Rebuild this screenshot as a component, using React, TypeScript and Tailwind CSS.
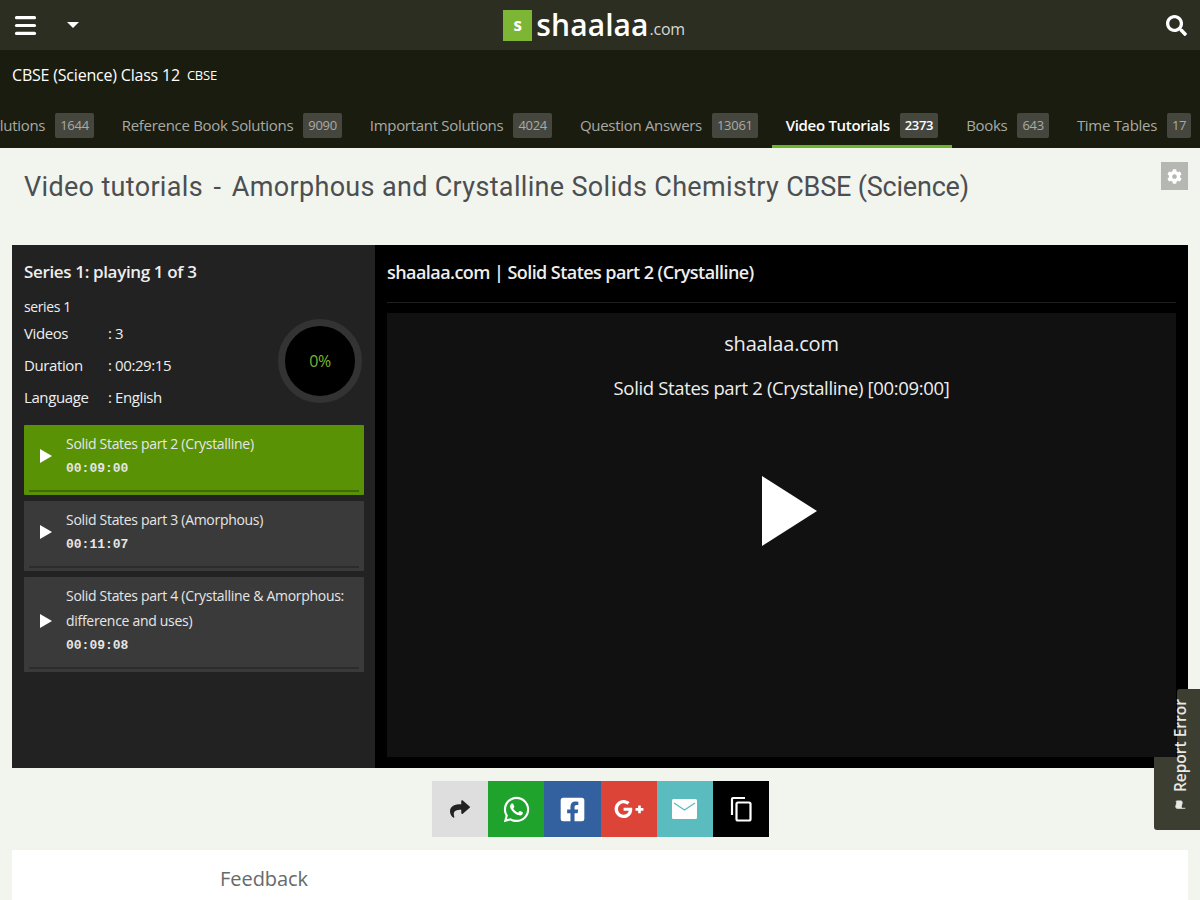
import { Menu, Flag } from "lucide-react";
import { FaWhatsapp, FaFacebookSquare, FaGooglePlusG, FaShare, FaSearch, FaCog } from "react-icons/fa";

const tabs = [
  { label: "Textbook Solutions", count: "1644" },
  { label: "Reference Book Solutions", count: "9090" },
  { label: "Important Solutions", count: "4024" },
  { label: "Question Answers", count: "13061" },
  { label: "Video Tutorials", count: "2373", active: true },
  { label: "Books", count: "643" },
  { label: "Time Tables", count: "17" },
];

const videos = [
  { title: "Solid States part 2 (Crystalline)", time: "00:09:00", active: true },
  { title: "Solid States part 3 (Amorphous)", time: "00:11:07" },
  { title: "Solid States part 4 (Crystalline & Amorphous: difference and uses)", time: "00:09:08" },
];

export default function App() {
  return (
    <div className="relative h-[900px] w-[1200px] overflow-hidden bg-[#f2f5ee] font-['Open_Sans',sans-serif]">
      <header className="flex h-[50px] items-center justify-between bg-[#2c2e22] pl-[12px] pr-[13px] text-white">
        <div className="flex w-[200px] items-center gap-[28px]">
          <Menu size={27} strokeWidth={2.8} />
          <div className="h-0 w-0 border-x-[6px] border-t-[6px] border-x-transparent border-t-white" />
        </div>
        <div className="mr-[11px] flex items-center gap-[4px]">
          <div className="flex h-[31px] w-[29px] items-center justify-center bg-[#7db635] text-[17px] font-bold text-white">
            s
          </div>
          <span className="text-[30px] leading-none font-semibold tracking-[0.1px]">shaalaa</span>
          <span className="mt-[7px] -ml-[3px] text-[16px] leading-none tracking-[-0.3px] text-[#d8d8d2]">.com</span>
        </div>
        <div className="flex w-[200px] justify-end">
          <FaSearch size={21} />
        </div>
      </header>

      <div className="bg-[#1a1c10]">
        <div className="flex h-[50px] items-center gap-[7px] pl-[12px] text-white">
          <span className="text-[16px] tracking-[-0.2px]">CBSE (Science) Class 12</span>
          <span className="mt-[1px] text-[13px] tracking-[-0.2px]">CBSE</span>
        </div>
        <div className="-ml-[97px] flex h-[48px] whitespace-nowrap">
          {tabs.map((t) => (
            <div
              key={t.label}
              className={`flex items-center gap-[10px] border-b-[3px] px-[14px] pt-[6px] text-[15px] tracking-[-0.3px] ${
                t.active ? "border-[#6fb52c] font-semibold text-white" : "border-transparent text-[#a9aaa4]"
              }`}
            >
              <span>{t.label}</span>
              <span
                className={`flex h-[25px] items-center rounded-[2px] bg-[#45473f] px-[5px] text-[13px] ${
                  t.active ? "text-white" : "text-[#a9aaa4]"
                }`}
              >
                {t.count}
              </span>
            </div>
          ))}
        </div>
      </div>

      <div className="flex h-[97px] items-start justify-between pl-[24px] pr-[12px] pt-[20px]">
        <h1 className="font-['Roboto',sans-serif] text-[27px] leading-[38px] tracking-[0.33px] text-[#4c4f52]">
          Video tutorials <span className="mx-[3.5px]">-</span> Amorphous and Crystalline Solids Chemistry{" "}
          <span className="tracking-[-0.2px]">CBSE (Science)</span>
        </h1>
        <div className="mt-[-6px] flex h-[28px] w-[27px] items-center justify-center bg-[#b5b7b3] text-white">
          <FaCog size={15} />
        </div>
      </div>

      <main className="mx-[12px] flex h-[523px] bg-black">
        <aside className="flex w-[363px] shrink-0 flex-col bg-[#222222] pl-[12px] pr-[11px] pt-[14px] text-[#eeeeee]">
          <h2 className="text-[17px] leading-[26px] font-semibold tracking-[-0.35px]">Series 1: playing 1 of 3</h2>
          <div className="flex items-start justify-between">
            <div className="pt-[12px] text-[15px] tracking-[-0.4px]">
              <div className="text-[14px] leading-[20px]">series 1</div>
              <InfoRow label="Videos" value=": 3" />
              <InfoRow label="Duration" value=": 00:29:15" />
              <InfoRow label="Language" value=": English" />
            </div>
            <div className="mt-[34px] mr-[2px] flex h-[84px] w-[84px] items-center justify-center rounded-full border-[7px] border-[#333333] bg-black text-[16px] tracking-[-0.5px] text-[#79b52d]">
              0%
            </div>
          </div>
          <div className="mt-[12px] flex flex-col gap-[6px]">
            {videos.map((v) => (
              <VideoRow key={v.title} {...v} />
            ))}
          </div>
        </aside>

        <section className="flex min-w-0 flex-1 flex-col px-[12px] pb-[11px]">
          <div className="flex h-[58px] shrink-0 items-center border-b border-[#1f1f1f] pb-[2px] text-[18px] font-semibold tracking-[-0.56px] text-[#eeeeee]">
            shaalaa.com | Solid States part 2 (Crystalline)
          </div>
          <div className="mt-[10px] flex flex-1 flex-col items-center bg-[#111111] pt-[16px] text-[#eeeeee]">
            <div className="text-[20px] leading-[30px] tracking-[-0.2px]">shaalaa.com</div>
            <div className="mt-[14px] text-[18.5px] leading-[30px] tracking-[-0.35px]">
              Solid States part 2 (Crystalline) [00:09:00]
            </div>
            <svg width="55" height="70" viewBox="0 0 55 70" className="mt-[73px] ml-[16px]">
              <polygon points="0,0 55,35 0,70" fill="white" />
            </svg>
          </div>
        </section>
      </main>

      <div className="mt-[13px] flex justify-center pl-[1px]">
        <ShareButton className="bg-[#dedede] text-[#222222]">
          <FaShare size={20} />
        </ShareButton>
        <ShareButton className="bg-[#1fa32c] text-white">
          <FaWhatsapp size={29} />
        </ShareButton>
        <ShareButton className="bg-[#33619f] text-white">
          <FaFacebookSquare size={27} />
        </ShareButton>
        <ShareButton className="bg-[#dc4437] text-white">
          <FaGooglePlusG size={30} />
        </ShareButton>
        <ShareButton className="bg-[#5abcbf] text-white">
          <svg width="25" height="20" viewBox="0 0 25 20">
            <rect width="25" height="20" rx="1.5" fill="white" />
            <polyline points="2,4 12.5,11 23,4" fill="none" stroke="#5abcbf" strokeWidth="1.3" />
          </svg>
        </ShareButton>
        <ShareButton className="bg-black text-white">
          <svg width="22" height="26" viewBox="0 0 22 26" fill="none" stroke="white" strokeWidth="2.2">
            <path d="M2 19V3a1 1 0 0 1 1-1h12" />
            <rect x="6.5" y="6.5" width="14" height="18" rx="1.5" />
          </svg>
        </ShareButton>
      </div>

      <div className="mx-[12px] mt-[13px] h-[60px] bg-white pl-[208px] pt-[14px] text-[20px] leading-[30px] tracking-[-0.05px] text-[#666a6c]">
        Feedback
      </div>

      {/* report error tab sits over the player */}
      <div className="absolute right-0 top-[689px] h-[68px] w-[23px] rounded-tl-[3px] bg-[#3c3e32]" />
      <div className="absolute right-0 top-[757px] h-[73px] w-[46px] rounded-bl-[3px] bg-[#3c3e32]" />
      <div className="absolute right-[12px] top-[699px] flex h-[112px] w-[16px] items-center justify-center">
        <div className="flex rotate-[-90deg] items-center gap-[7px] whitespace-nowrap text-[15.5px] font-semibold tracking-[0px] text-[#e8e8e4]">
          <Flag size={11} fill="currentColor" />
          Report Error
        </div>
      </div>
    </div>
  );
}

function InfoRow({ label, value }: { label: string; value: string }) {
  return (
    <div className="flex h-[32px] items-center">
      <span className="w-[84px]">{label}</span>
      <span>{value}</span>
    </div>
  );
}

function VideoRow({ title, time, active }: { title: string; time: string; active?: boolean }) {
  return (
    <div className={`flex items-stretch rounded-[1px] px-[5px] pb-[3px] ${active ? "bg-[#5a9206]" : "bg-[#3a3a3a]"}`}>
      <div className={`flex w-full border-b-2 pt-[6px] pb-[9px] ${active ? "border-[#3f6a05]" : "border-[#2c2c2c]"}`}>
        <div className="flex w-[37px] shrink-0 items-center pl-[11px]">
          <svg width="12" height="14" viewBox="0 0 12 14">
            <polygon points="0,0 12,7 0,14" fill="white" />
          </svg>
        </div>
        <div className="min-w-0 pr-[4px] text-[14px] leading-[25px] tracking-[-0.3px] text-[#e6e6e6]">
          <div>{title}</div>
          <div className="font-['Liberation_Mono',monospace] text-[13px] font-bold tracking-[0px]">{time}</div>
        </div>
      </div>
    </div>
  );
}

function ShareButton({ className, children }: { className: string; children: React.ReactNode }) {
  return <div className={`flex h-[56px] w-[56.2px] items-center justify-center ${className}`}>{children}</div>;
}
